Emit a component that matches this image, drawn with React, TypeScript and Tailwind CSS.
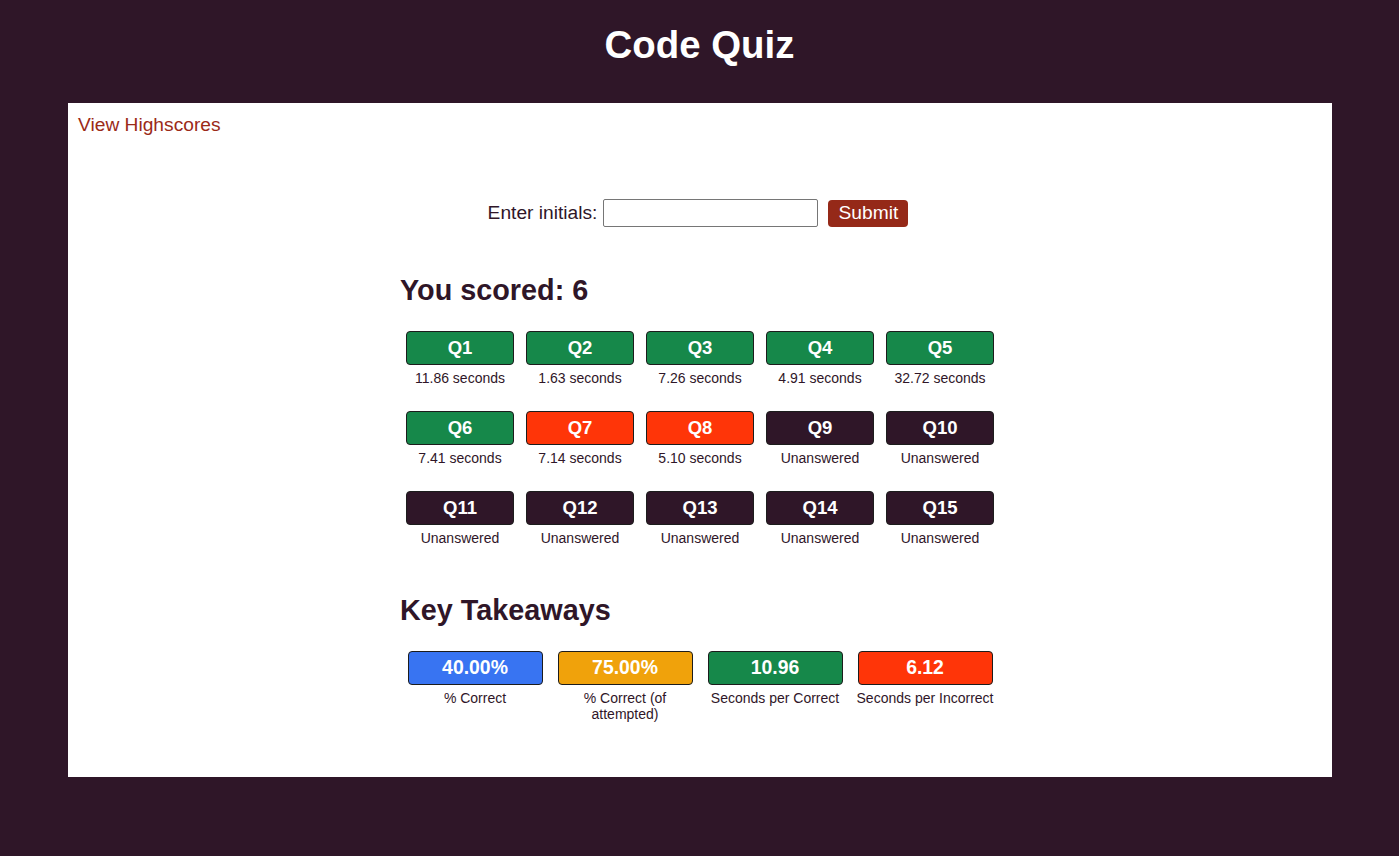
import React from "react";

type Q = { label: string; note: string; kind: "ok" | "bad" | "none" };

const qs: Q[] = [
  { label: "Q1", note: "11.86 seconds", kind: "ok" },
  { label: "Q2", note: "1.63 seconds", kind: "ok" },
  { label: "Q3", note: "7.26 seconds", kind: "ok" },
  { label: "Q4", note: "4.91 seconds", kind: "ok" },
  { label: "Q5", note: "32.72 seconds", kind: "ok" },
  { label: "Q6", note: "7.41 seconds", kind: "ok" },
  { label: "Q7", note: "7.14 seconds", kind: "bad" },
  { label: "Q8", note: "5.10 seconds", kind: "bad" },
  { label: "Q9", note: "Unanswered", kind: "none" },
  { label: "Q10", note: "Unanswered", kind: "none" },
  { label: "Q11", note: "Unanswered", kind: "none" },
  { label: "Q12", note: "Unanswered", kind: "none" },
  { label: "Q13", note: "Unanswered", kind: "none" },
  { label: "Q14", note: "Unanswered", kind: "none" },
  { label: "Q15", note: "Unanswered", kind: "none" },
];

const kindClass: Record<Q["kind"], string> = {
  ok: "bg-[#16884a]",
  bad: "bg-[#ff3508]",
  none: "bg-[#2f1628]",
};

const takeaways = [
  { value: "40.00%", label: "% Correct", cls: "bg-[#3874f2]" },
  { value: "75.00%", label: "% Correct (of attempted)", cls: "bg-[#f0a20b]" },
  { value: "10.96", label: "Seconds per Correct", cls: "bg-[#16884a]" },
  { value: "6.12", label: "Seconds per Incorrect", cls: "bg-[#ff3508]" },
];

export default function App() {
  return (
    <div
      className="min-h-[856px] bg-[#2f1628] text-[#2f1628]"
      style={{ fontFamily: '"Liberation Sans", Arial, sans-serif' }}
    >
      <header className="h-[103px] pt-[24px]">
        <h1 className="text-center text-[38.4px] font-bold leading-[42px] text-white">Code Quiz</h1>
      </header>
      <main className="ml-[68px] mr-[67px] h-[674px] bg-white">
        <div className="p-[10px] leading-[24px]">
          <a className="text-[19.2px] text-[#9b2a18] cursor-pointer">View Highscores</a>
        </div>
        <div className="mt-[51px] flex items-center justify-center pr-[4px] text-[19.2px] leading-[22px]">
          <span>Enter initials:</span>
          <input
            type="text"
            className="ml-[6px] h-[28px] w-[215px] rounded-[2px] border border-[#767676] px-1 outline-none"
          />
          <button className="ml-[10px] h-[27px] w-[80px] rounded-[4px] bg-[#952918] text-[19.2px] text-white">
            Submit
          </button>
        </div>
        <section className="mx-auto mt-[47px] w-[600px]">
          <h2 className="text-[28.8px] font-bold leading-[32px]">You scored: 6</h2>
          <div className="mt-[25px] grid grid-cols-5 gap-y-[24px]">
            {qs.map((q) => (
              <div key={q.label} className="flex flex-col items-center">
                <div
                  className={`flex h-[34px] w-[108px] items-center justify-center rounded-[4px] border border-[#1c1c1c] text-[18.5px] font-bold text-white ${kindClass[q.kind]}`}
                >
                  {q.label}
                </div>
                <div className="mt-[5px] text-[14px] leading-[17px]">{q.note}</div>
              </div>
            ))}
          </div>
          <h2 className="mt-[47px] text-[28.8px] font-bold leading-[32px]">Key Takeaways</h2>
          <div className="mt-[25px] grid grid-cols-4">
            {takeaways.map((t) => (
              <div key={t.label} className="flex flex-col items-center">
                <div
                  className={`flex h-[34px] w-[135px] items-center justify-center rounded-[4px] border border-[#1c1c1c] text-[19.4px] font-bold text-white ${t.cls}`}
                >
                  {t.value}
                </div>
                <div className="mt-[5px] w-[140px] text-center text-[14px] leading-[16px]">{t.label}</div>
              </div>
            ))}
          </div>
        </section>
      </main>
    </div>
  );
}
